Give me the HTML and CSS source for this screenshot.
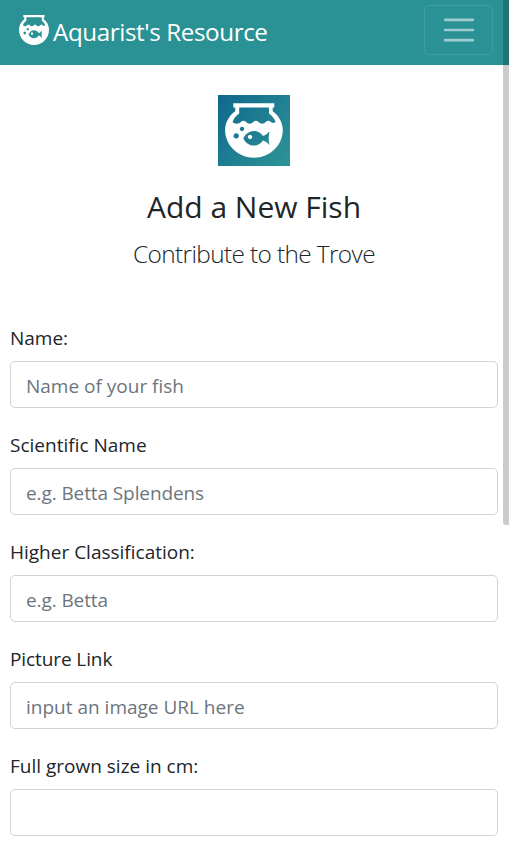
FILE: index.html
```html
<!DOCTYPE html>
<html lang="en">
<head>
<meta charset="utf-8">
<title>Aquarist's Resource</title>
<link rel="stylesheet" href="styles.css">
</head>
<body>
<svg class="defs" aria-hidden="true">
  <defs>
    <linearGradient id="sea" x1="0" y1="0" x2="1" y2="0.8">
      <stop offset="0" stop-color="#10678d"/>
      <stop offset="1" stop-color="#2a9195"/>
    </linearGradient>
    <symbol id="bowl" viewBox="0 0 72 71">
      <path fill="#fff" fill-rule="evenodd" d="M15.3 8.3H56.3V12.6H54.7V16.2C61 20.8 64.8 27.7 64.8 35C64.8 50.3 52 62.7 36 62.7S7.1 50.3 7.1 35C7.1 27.7 11 20.8 17.2 16.2V12.6H15.3ZM21.2 12.6V18.6C18.6 20.3 16.4 22.9 14.5 27C17.3 29.4 20.7 29.2 23.1 26.8Q25.5 24.7 27.8 26.8C30.3 29.4 33.2 29.4 35.6 26.8Q37.9 24.7 40.2 26.8C42.7 29.4 45.7 29.4 48 26.8Q50.3 24.7 52.5 26.8C54 28.3 55.5 28.3 57.7 27C55.6 22.9 53.6 20.3 51 18.6V12.6ZM25.3 43.4C27.6 38.9 31.4 36 36 36C39.8 36 42.6 37.6 45 40.9C47.6 40.2 49.6 38.4 51.6 36.2C50.3 41 50.3 45.6 51.6 50.2C49.6 48 47.6 46.2 45 45.6C42.6 49 39.8 50.6 36 50.6C31.4 50.6 27.6 47.9 25.3 43.4ZM32 39.8a2.2 2.2 0 1 0 .01 0ZM24 31.8a2.2 2.2 0 1 0 .01 0ZM18.2 38.3a2.6 2.6 0 1 0 .01 0Z"/>
    </symbol>
  </defs>
</svg>
<nav class="navbar">
  <a class="brand"><svg class="brand-icon" viewBox="7.1 8.3 57.7 54.4" preserveAspectRatio="none"><use href="#bowl" width="72" height="71"/></svg><span class="brand-name">Aquarist's Resource</span></a>
  <button class="toggler" aria-label="Menu">
    <svg viewBox="0 0 30 30"><path d="M4 7h22M4 15h22M4 23h22" stroke="currentColor" stroke-width="2" stroke-linecap="round"/></svg>
  </button>
</nav>
<main>
  <header class="intro">
    <svg class="logo" viewBox="0 0 72 71"><rect width="72" height="71" fill="url(#sea)"/><use href="#bowl" width="72" height="71"/></svg>
    <h1>Add a New Fish</h1>
    <p>Contribute to the Trove</p>
  </header>
  <form>
    <div class="field"><label for="name">Name:</label><input id="name" placeholder="Name of your fish"></div>
    <div class="field"><label for="sci">Scientific Name</label><input id="sci" class="tight" placeholder="e.g. Betta Splendens"></div>
    <div class="field"><label for="cls">Higher Classification:</label><input id="cls" class="tight" placeholder="e.g. Betta"></div>
    <div class="field"><label for="pic" class="tight">Picture Link</label><input id="pic" placeholder="input an image URL here"></div>
    <div class="field"><label for="size">Full grown size in cm:</label><input id="size"></div>
  </form>
</main>
<div class="scroll-thumb"></div>
</body>
</html>
```
FILE: styles.css
```css
* { box-sizing: border-box; }
html, body { height: 100%; overflow: hidden; }
body {
  margin: 0;
  background: #fff;
  color: #212529;
  font-family: "Segoe UI", "Open Sans", "Noto Sans", sans-serif;
  font-size: 19px;
}
.defs { position: absolute; width: 0; height: 0; }
.navbar {
  display: flex;
  align-items: flex-start;
  justify-content: space-between;
  height: 65px;
  padding: 5px 16px 0 19px;
  background: #2a9195;
}
.brand { display: flex; color: #fff; padding-top: 10px; }
.brand-icon { width: 30px; height: 30px; margin-right: 4px; }
.brand-name { font-size: 24.2px; line-height: 34px; white-space: nowrap; letter-spacing: -0.4px; }
.toggler {
  display: flex;
  align-items: center;
  justify-content: center;
  width: 69px;
  height: 50px;
  padding: 0;
  border: 1px solid rgba(255, 255, 255, .1);
  border-radius: 5px;
  background: transparent;
  color: rgba(255, 255, 255, .55);
}
.toggler svg { width: 38px; height: 38px; }
main { padding: 30px 11px 0 10px; }
.intro { display: flex; flex-direction: column; align-items: center; height: 228px; }
.logo { width: 72px; height: 71px; }
h1 { margin: 23px 0 0; font-size: 30px; font-weight: 400; line-height: 36px; white-space: nowrap; }
p { margin: 11px 0 0; font-size: 24.4px; font-weight: 300; line-height: 36px; white-space: nowrap; letter-spacing: -0.62px; }
.field { height: 107px; }
label { display: block; height: 38px; line-height: 30px; white-space: nowrap; }
input {
  display: block;
  width: 100%;
  height: 47px;
  padding: 2px 15px 0;
  border: 1px solid #ced4da;
  border-radius: 5px;
  background: #fff;
  color: #495057;
  font: inherit;
}
input::placeholder { color: #6c757d; opacity: 1; }
.tight { letter-spacing: -0.1px; }
.scroll-thumb {
  position: fixed;
  top: 0;
  right: 0;
  width: 6px;
  height: 525px;
  border-bottom-left-radius: 3px;
  background: rgba(0, 0, 0, .2);
}
```
